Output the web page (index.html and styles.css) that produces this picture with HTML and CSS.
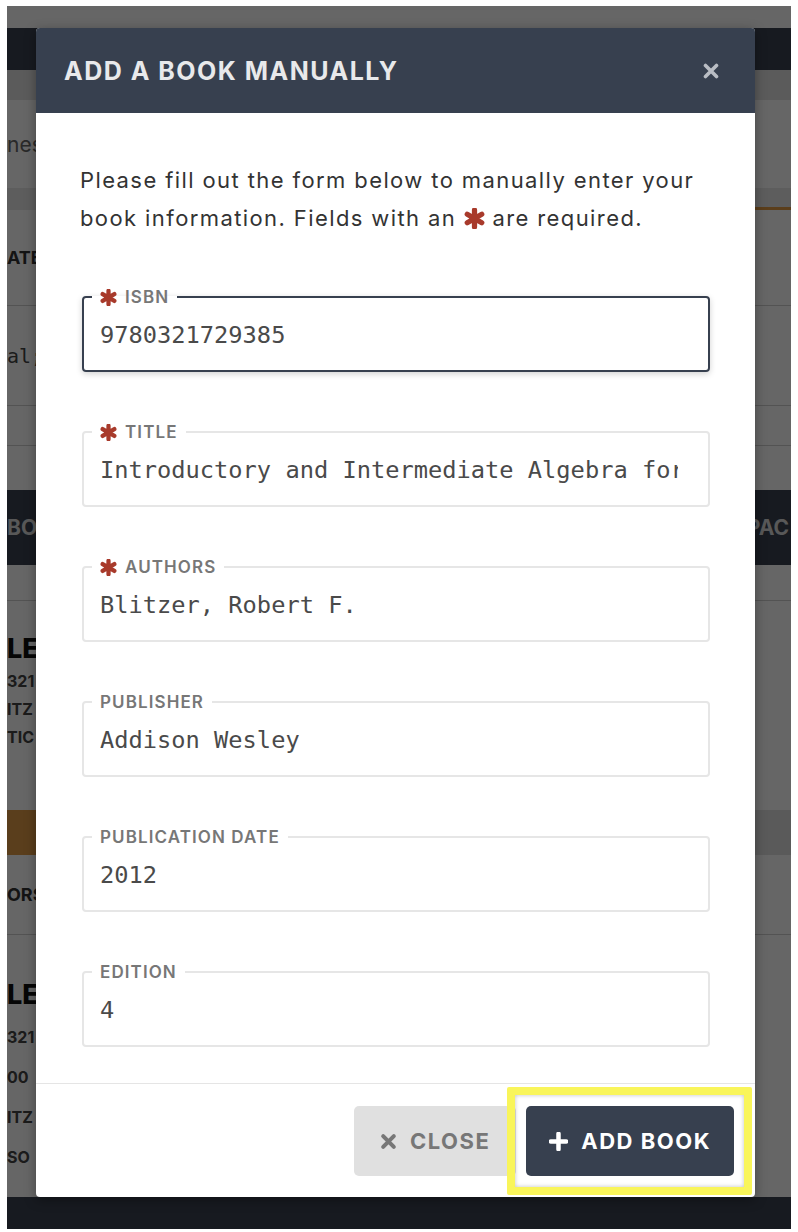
FILE: index.html
```html
<!DOCTYPE html>
<html lang="en">
<head>
<meta charset="UTF-8">
<meta name="viewport" content="width=device-width, initial-scale=1.0">
<title>Add a Book Manually</title>
<link rel="stylesheet" href="styles.css">
</head>
<body>

<div class="screen">

  <!-- page behind the dialog -->
  <div class="page">
    <div class="topbar"></div>
    <div class="navbar"></div>
    <div class="subbar"></div>
    <div class="row search"><span class="frag">nes:</span></div>
    <div class="tabs"><span class="tab-active"></span></div>
    <div class="row head"><span class="frag bold">ATE</span></div>
    <div class="row mono"><span class="frag code">al;</span></div>
    <div class="row line40"></div>
    <div class="row line44"></div>
    <div class="section-bar"><span>BO</span><span>PAC</span></div>
    <div class="row line36"></div>
    <div class="book first">
      <div class="book-title">LE</div>
      <div class="book-meta">321</div>
      <div class="book-meta">ITZ</div>
      <div class="book-meta">TIC</div>
    </div>
    <div class="band"><span class="band-btn"></span></div>
    <div class="row authors"><span class="frag bold">ORS</span></div>
    <div class="book second">
      <div class="book-title">LE</div>
      <div class="book-meta">321</div>
      <div class="book-meta">00</div>
      <div class="book-meta">ITZ</div>
      <div class="book-meta">SO</div>
    </div>
    <div class="page-footer"></div>
  </div>

  <div class="overlay"></div>

  <!-- dialog -->
  <div class="modal">
    <div class="modal-header">
      <h3>Add a Book Manually</h3>
      <svg class="header-close" viewBox="0 0 16 16"><path d="M2.5 2.5 13.5 13.5M13.5 2.5 2.5 13.5"/></svg>
    </div>

    <form class="modal-body" onsubmit="return false;">
      <p class="intro">Please fill out the form below to manually enter your<br>book information. Fields with an <svg class="req big" viewBox="0 0 20 20"><path d="M10 2v16M3.1 6 16.9 14M3.1 14 16.9 6"/></svg> are required.</p>

      <fieldset class="field focused">
        <legend><svg class="req" viewBox="0 0 20 20"><path d="M10 2v16M3.1 6 16.9 14M3.1 14 16.9 6"/></svg>ISBN</legend>
        <input type="text" value="9780321729385">
      </fieldset>

      <fieldset class="field">
        <legend><svg class="req" viewBox="0 0 20 20"><path d="M10 2v16M3.1 6 16.9 14M3.1 14 16.9 6"/></svg>Title</legend>
        <input type="text" value="Introductory and Intermediate Algebra for College Students">
      </fieldset>

      <fieldset class="field">
        <legend><svg class="req" viewBox="0 0 20 20"><path d="M10 2v16M3.1 6 16.9 14M3.1 14 16.9 6"/></svg>Authors</legend>
        <input type="text" value="Blitzer, Robert F.">
      </fieldset>

      <fieldset class="field">
        <legend>Publisher</legend>
        <input type="text" value="Addison Wesley">
      </fieldset>

      <fieldset class="field">
        <legend>Publication Date</legend>
        <input type="text" value="2012">
      </fieldset>

      <fieldset class="field">
        <legend>Edition</legend>
        <input type="text" value="4">
      </fieldset>
    </form>

    <div class="modal-footer">
      <button class="btn btn-close"><svg viewBox="0 0 16 16"><path d="M3 3 13 13M13 3 3 13"/></svg>Close</button>
      <button class="btn btn-add"><svg viewBox="0 0 16 16"><path d="M8 1.5v13M1.5 8h13"/></svg>Add Book</button>
    </div>
  </div>

</div>

</body>
</html>
```

FILE: styles.css
```css
* {
  box-sizing: border-box;
}
body {
  margin: 0;
  background-color: #fff;
  font-family: Inter, "Open Sans", sans-serif;
}
.screen {
  position: relative;
  margin: 6px 7px 3px 7px;
  height: 1223px;
  overflow: hidden;
}

/* background page */
.page {
  display: flex;
  flex-direction: column;
  height: 100%;
  background-color: #fff;
  color: #333;
}
.topbar { height: 22px; }
.navbar { height: 42px; background-color: #3a4352; }
.subbar { height: 30px; background-color: #e3e3e3; }
.row {
  display: flex;
  align-items: center;
  border-bottom: 1px solid #cfcfcf;
}
.search { height: 88px; border-bottom: none; }
.search .frag { font-size: 21px; color: #666; }
.tabs {
  display: flex;
  justify-content: flex-end;
  height: 22px;
  background-color: #e8e8e8;
}
.tab-active {
  width: 300px;
  border-bottom: 3px solid #e39c45;
}
.head { height: 96px; }
.mono { height: 100px; }
.line40 { height: 40px; }
.line44 { height: 44px; border-bottom: none; }
.line36 { height: 36px; }
.authors { height: 80px; }
.frag { font-size: 18px; }
.bold { font-weight: 700; text-transform: uppercase; color: #333; }
.code { font-family: "DejaVu Sans Mono", monospace; font-size: 20px; color: #444; }
.section-bar {
  display: flex;
  justify-content: space-between;
  align-items: center;
  height: 75px;
  padding-right: 2px;
  background-color: #3a4352;
  color: #ddd;
  font-size: 21px;
  font-weight: 700;
}
.book {
  padding-top: 30px;
}
.book.first { height: 209px; }
.book.second { height: 262px; padding-top: 42px; }
.book-title {
  font-size: 27px;
  font-weight: 800;
  line-height: 36px;
  color: #111;
}
.book-meta {
  font-size: 16px;
  font-weight: 700;
  line-height: 28px;
  color: #444;
}
.book.second .book-meta { line-height: 40px; }
.book.second .book-title { margin-bottom: 4px; }
.band {
  height: 45px;
  background-color: #e0e0e0;
}
.band-btn {
  display: block;
  width: 60px;
  height: 100%;
  background-color: #e19b46;
}
.page-footer {
  flex: 1;
  background-color: #3a4352;
}
.overlay {
  position: absolute;
  inset: 0;
  background-color: rgba(0, 0, 0, 0.6);
}

/* dialog */
.modal {
  position: absolute;
  left: 29px;
  top: 22px;
  width: 719px;
  background-color: #fff;
  border-radius: 4px;
  box-shadow: 0 3px 12px rgba(0, 0, 0, 0.35);
}
.modal-header {
  display: flex;
  align-items: center;
  justify-content: space-between;
  height: 85px;
  padding: 0 36px 0 28px;
  background-color: #37404f;
  border-radius: 4px 4px 0 0;
}
.modal-header h3 {
  margin: 0;
  font-size: 25px;
  font-weight: 700;
  letter-spacing: 1.5px;
  text-transform: uppercase;
  color: #e8e9eb;
}
.header-close {
  width: 16px;
  height: 16px;
  stroke: #b9bdc4;
  stroke-width: 3.6;
  stroke-linecap: round;
  fill: none;
}
.modal-body {
  display: flex;
  flex-direction: column;
  gap: 50px;
  padding: 48px 45px 36px 46px;
}
.intro {
  margin: 0 0 0 -2px;
  font-size: 22px;
  line-height: 38px;
  letter-spacing: 1.4px;
  color: #333;
  white-space: nowrap;
}
.req {
  width: 17px;
  height: 17px;
  stroke: #a83a2b;
  stroke-width: 5;
  stroke-linecap: round;
  fill: none;
  margin-right: 8px;
  vertical-align: -2px;
}
.req.big {
  width: 21px;
  height: 21px;
  margin-right: 0;
  vertical-align: -3px;
}
.field {
  margin: 0;
  min-inline-size: 0;
  padding: 0 30px 10px 16px;
  border: 2px solid #e6e6e6;
  border-radius: 4px;
}
.field.focused {
  border-color: #37404f;
  box-shadow: 0 2px 6px rgba(0, 0, 0, 0.18);
}
.field legend {
  display: flex;
  align-items: center;
  margin-left: -8px;
  padding: 0 8px;
  font-size: 17px;
  font-weight: 600;
  line-height: 20px;
  letter-spacing: 1.1px;
  text-transform: uppercase;
  color: #777;
}
.field input {
  display: block;
  width: 100%;
  height: 50px;
  margin-top: 3px;
  padding: 0;
  border: none;
  outline: none;
  background: transparent;
  font-family: "DejaVu Sans Mono", monospace;
  font-size: 23.7px;
  color: #4a4a4a;
}
.modal-footer {
  display: flex;
  justify-content: flex-end;
  gap: 10px;
  padding: 22px 21px 21px 21px;
  border-top: 1px solid #e5e5e5;
}
.btn {
  display: flex;
  align-items: center;
  gap: 13px;
  height: 70px;
  border: none;
  border-radius: 5px;
  font-family: Inter, "Open Sans", sans-serif;
  font-size: 22px;
  font-weight: 700;
  letter-spacing: 1.5px;
  text-transform: uppercase;
  cursor: pointer;
}
.btn svg {
  width: 17px;
  height: 17px;
  fill: none;
  stroke-width: 3.8;
  stroke-linecap: round;
}
.btn-close {
  padding: 0 26px;
  background-color: #e0e0e0;
  color: #777;
}
.btn-close svg { stroke: #777; }
.btn-add {
  position: relative;
  padding: 0 23px 0 23px;
  background-color: #37404f;
  color: #fff;
}
.btn-add svg { stroke: #fff; width: 19px; height: 19px; }
/* yellow highlight marker round the button */
.btn-add::after {
  content: "";
  position: absolute;
  inset: -19px -18px -19px -19px;
  border: 8px solid #f9f55a;
  border-radius: 2px;
  box-shadow: inset 0 0 4px rgba(0, 0, 0, 0.25);
}
```
